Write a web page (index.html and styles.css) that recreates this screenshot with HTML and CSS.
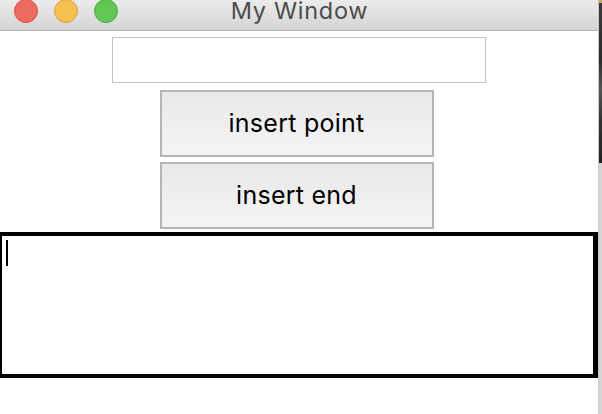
FILE: index.html
```html
<!DOCTYPE html>
<html>
<head>
<meta charset="utf-8">
<title>My Window</title>
<link rel="stylesheet" href="styles.css">
</head>
<body>
<div class="screen">
  <div class="window">
    <div class="titlebar">
      <div class="lights">
        <span class="light red"></span>
        <span class="light yellow"></span>
        <span class="light green"></span>
      </div>
      <div class="title">My Window</div>
    </div>
    <div class="content">
      <input class="entry" type="text">
      <div class="buttons">
        <button class="btn">insert point</button>
        <button class="btn">insert end</button>
      </div>
      <div class="textbox"><span class="caret"></span></div>
    </div>
  </div>
  <div class="desk">
    <div class="desk-top"></div>
    <div class="desk-bottom"></div>
  </div>
</div>
</body>
</html>
```
FILE: styles.css
```css
html, body {
  margin: 0;
  padding: 0;
  height: 100%;
  background: #ffffff;
}
.screen {
  display: flex;
  width: 602px;
  height: 414px;
  overflow: hidden;
}
.window {
  width: 598px;
  flex: none;
  display: flex;
  flex-direction: column;
  background: #ffffff;
}
.titlebar {
  position: relative;
  height: 30px;
  border-bottom: 1px solid #b3b3b3;
  background: linear-gradient(#ebebeb, #d5d5d5);
  display: flex;
  align-items: flex-start;
  justify-content: center;
  flex: none;
}
.lights {
  position: absolute;
  left: 14px;
  top: -1px;
  display: flex;
  gap: 16px;
}
.light {
  width: 24px;
  height: 24px;
  border-radius: 50%;
  box-sizing: border-box;
  border: 1px solid rgba(0,0,0,0.12);
}
.red { background: #ee6b60; border-color: #da5148; }
.yellow { background: #f6c050; border-color: #dea236; }
.green { background: #62c655; border-color: #4ea83f; }
.title {
  font-family: Inter, "Noto Sans", sans-serif;
  font-size: 23.5px;
  line-height: 22px;
  letter-spacing: 0.7px;
  color: #4c4c4c;
  margin-top: 0;
  padding-left: 1px;
}
.content {
  display: flex;
  flex-direction: column;
  align-items: center;
  padding-top: 6px;
}
.entry {
  box-sizing: border-box;
  width: 374px;
  height: 46px;
  margin: 0 0 0 -1px;
  border: 1px solid #c2c2c2;
  background: #fff;
  outline: none;
  padding: 0 6px;
  font-family: Inter, sans-serif;
  font-size: 20px;
}
.buttons {
  display: flex;
  flex-direction: column;
  gap: 5px;
  margin-top: 7px;
  margin-left: -5px;
}
.btn {
  box-sizing: border-box;
  width: 274px;
  height: 67px;
  border: 2px solid #b5b5b5;
  border-radius: 0;
  background: linear-gradient(#e9e9e9, #f4f4f4);
  font-family: Inter, "Noto Sans", sans-serif;
  font-size: 25px;
  letter-spacing: 0.25px;
  color: #000;
  padding: 0 0 2px 0;
  margin: 0;
}
.textbox {
  box-sizing: border-box;
  align-self: stretch;
  height: 146px;
  margin-top: 3px;
  border: 4px solid #000;
  border-left-width: 2px;
  border-right-width: 5px;
  padding: 4px 4px;
  background: #fff;
}
.caret {
  display: block;
  width: 1.5px;
  height: 26px;
  background: #000;
}
.desk {
  flex: 1;
  display: flex;
  flex-direction: column;
  border-left: 1px solid #c8c8c8;
}
.desk-top {
  height: 163px;
  background: linear-gradient(#caa850 0, #caa850 3px, #3a3a3a 3px, #2c2c2c 60px, #555 90px, #333 120px, #222 163px);
}
.desk-bottom {
  flex: 1;
  background: #d4d4d4;
}
```
